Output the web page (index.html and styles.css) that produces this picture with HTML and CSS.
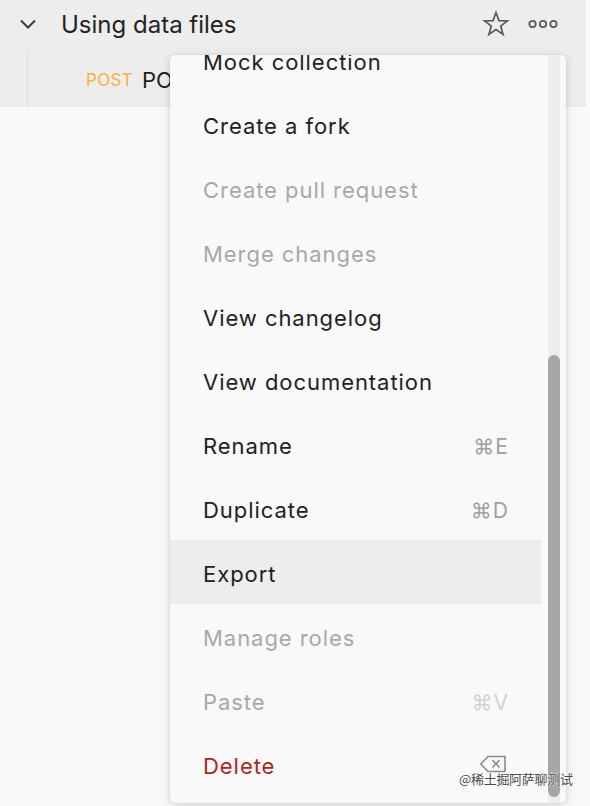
FILE: index.html
```html
<!DOCTYPE html>
<html lang="en">
<head>
<meta charset="utf-8">
<title>Collection menu</title>
<link rel="stylesheet" href="styles.css">
</head>
<body>
<div class="page">
  <div class="header">
    <div class="row collection">
      <svg class="chev" width="18" height="12" viewBox="0 0 18 12"><path d="M2 2.5 L9 9.5 L16 2.5" fill="none" stroke="#3a3a3a" stroke-width="2"/></svg>
      <span class="title">Using data files</span>
      <span class="spacer"></span>
      <svg class="star" width="28" height="28" viewBox="0 0 28 28"><path d="M14 2.5 L16.9 10.6 L25.5 10.8 L18.7 16.1 L21.1 24.5 L14 19.6 L6.9 24.5 L9.3 16.1 L2.5 10.8 L11.1 10.6 Z" fill="none" stroke="#5a5a5a" stroke-width="1.7" stroke-linejoin="miter"/></svg>
      <svg class="dots" width="30" height="10" viewBox="0 0 30 10"><circle cx="4.5" cy="5" r="3.2" fill="none" stroke="#5a5a5a" stroke-width="1.8"/><circle cx="15" cy="5" r="3.2" fill="none" stroke="#5a5a5a" stroke-width="1.8"/><circle cx="25.5" cy="5" r="3.2" fill="none" stroke="#5a5a5a" stroke-width="1.8"/></svg>
    </div>
    <div class="row request">
      <span class="guide"></span>
      <span class="method">POST</span>
      <span class="req-name">POST request</span>
    </div>
  </div>

  <div class="menu">
    <ul class="items">
      <li class="item">Mock collection</li>
      <li class="item">Create a fork</li>
      <li class="item disabled">Create pull request</li>
      <li class="item disabled">Merge changes</li>
      <li class="item">View changelog</li>
      <li class="item">View documentation</li>
      <li class="item">Rename <span class="kbd">⌘E</span></li>
      <li class="item">Duplicate <span class="kbd">⌘D</span></li>
      <li class="item active">Export</li>
      <li class="item disabled">Manage roles</li>
      <li class="item disabled">Paste <span class="kbd faint">⌘V</span></li>
      <li class="item danger">Delete
        <svg class="bksp" width="28" height="18" viewBox="0 0 28 18"><path d="M9 1.5 H26 V16.5 H9 L1.8 9 Z" fill="none" stroke="#8a8a8a" stroke-width="1.6" stroke-linejoin="round"/><path d="M13.5 5 L20.5 12.5 M20.5 5 L13.5 12.5" stroke="#8a8a8a" stroke-width="1.6"/></svg>
      </li>
    </ul>
    <div class="scroll"><div class="track"><div class="thumb"></div></div></div>
  </div>

  <div class="watermark">@稀土掘阿萨聊测试</div>
</div>
</body>
</html>
```

FILE: styles.css
```css
* { box-sizing: border-box; }
html, body { margin: 0; padding: 0; }
body {
  width: 590px;
  height: 806px;
  overflow: hidden;
  background: #f9f9f9;
  font-family: Inter, "Noto Sans", sans-serif;
  color: #212121;
}
.page {
  position: relative;
  width: 590px;
  height: 806px;
}
.header {
  background: #ededed;
  width: 586px;
  height: 107px;
}
.row {
  display: flex;
  align-items: center;
}
.collection {
  height: 48px;
  padding-left: 19px;
  padding-right: 28px;
}
.chev { flex: none; }
.title {
  margin-left: 24px;
  font-size: 24px;
  letter-spacing: 0;
  color: #232323;
}
.spacer { flex: 1; }
.star { margin-right: 18px; margin-top: -1px; }
.request {
  height: 59px;
  align-items: stretch;
}
.guide {
  width: 1px;
  margin-left: 27px;
  margin-top: 4px;
  background: #dedede;
}
.method {
  margin-left: 58px;
  align-self: center;
  font-size: 17px;
  letter-spacing: 0.3px;
  color: #f3b33e;
  margin-top: 4px;
}
.req-name {
  align-self: center;
  margin-left: 9px;
  font-size: 22px;
  color: #212121;
  margin-top: 4px;
}
.menu {
  position: absolute;
  left: 170px;
  top: 55px;
  width: 396px;
  height: 748px;
  background: #f9f9f9;
  border-radius: 5px;
  box-shadow: 0 2px 10px rgba(0,0,0,0.16), 0 0 2px rgba(0,0,0,0.10);
  overflow: hidden;
  display: flex;
}
.items {
  list-style: none;
  margin: -27px 0 0 0;
  padding: 0;
  width: 371px;
  flex: none;
}
.item {
  height: 64px;
  display: flex;
  align-items: center;
  padding-top: 4px;
  padding-left: 33px;
  padding-right: 32px;
  font-size: 22px;
  letter-spacing: 0.95px;
  color: #212121;
}
.item.disabled { color: #a8a8a8; }
.item.active { background: #ededed; }
.item.danger { color: #a8271c; }
.kbd {
  margin-left: auto;
  font-size: 21px;
  letter-spacing: 1px;
  color: #a0a0a0;
}
.kbd.faint { color: #d2d2d2; }
.bksp { margin-left: auto; margin-right: 2px; margin-top: -4px; }
.scroll {
  flex: 1;
  padding-left: 7px;
  padding-right: 6px;
}
.track {
  height: 100%;
  background: #eeeeee;
  padding-top: 300px;
  padding-bottom: 6px;
}
.thumb {
  height: 100%;
  background: #a6a6a6;
  border-radius: 6px;
}
.watermark {
  position: absolute;
  left: 459px;
  top: 769px;
  font-family: "Noto Sans CJK SC", sans-serif;
  font-size: 13px;
  letter-spacing: -0.3px;
  color: #4a4a4a;
  text-shadow: 0 0 2px #fff, 0 0 2px #fff;
  white-space: nowrap;
}
```
